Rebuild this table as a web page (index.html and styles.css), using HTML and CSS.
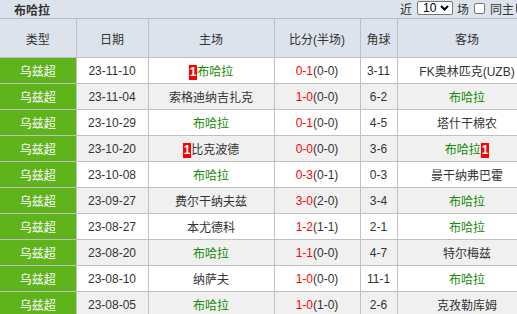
FILE: index.html
```html
<!DOCTYPE html>
<html lang="zh">
<head>
<meta charset="utf-8">
<link rel="stylesheet" href="styles.css">
</head>
<body>
<div class="viewport">
  <div class="panel">
    <div class="titlebar">
      <span class="title">布哈拉</span>
      <div class="controls">
        <span>近</span>
        <span class="select"><span class="sel-val">10</span><svg class="chev" width="9" height="6" viewBox="0 0 9 6"><path d="M1 1 L4.5 4.5 L8 1" fill="none" stroke="#000" stroke-width="2"/></svg></span>
        <span>场</span>
        <span class="check"></span>
        <span class="tail">同主</span>
        <span class="more"></span>
      </div>
    </div>
    <table class="matches">
      <colgroup>
        <col class="c1"><col class="c2"><col class="c3"><col class="c4"><col class="c5"><col class="c6">
      </colgroup>
      <thead>
        <tr><th>类型</th><th>日期</th><th>主场</th><th>比分(半场)</th><th>角球</th><th>客场</th></tr>
      </thead>
      <tbody>
        <tr><td class="lg">乌兹超</td><td>23-11-10</td><td><span class="card">1</span><span class="hl">布哈拉</span></td><td><span class="red">0-1</span>(0-0)</td><td>3-11</td><td class="team">FK奥林匹克(UZB)</td></tr>
        <tr><td class="lg">乌兹超</td><td>23-11-04</td><td class="team">索格迪纳吉扎克</td><td><span class="red">1-0</span>(0-0)</td><td>6-2</td><td><span class="hl">布哈拉</span></td></tr>
        <tr><td class="lg">乌兹超</td><td>23-10-29</td><td><span class="hl">布哈拉</span></td><td><span class="red">0-1</span>(0-0)</td><td>4-5</td><td class="team">塔什干棉农</td></tr>
        <tr><td class="lg">乌兹超</td><td>23-10-20</td><td class="team"><span class="card">1</span>比克波德</td><td><span class="red">0-0</span>(0-0)</td><td>3-6</td><td><span class="hl">布哈拉</span><span class="card">1</span></td></tr>
        <tr><td class="lg">乌兹超</td><td>23-10-08</td><td><span class="hl">布哈拉</span></td><td><span class="red">0-3</span>(0-1)</td><td>0-3</td><td class="team">曼干纳弗巴霍</td></tr>
        <tr><td class="lg">乌兹超</td><td>23-09-27</td><td class="team">费尔干纳夫兹</td><td><span class="red">3-0</span>(2-0)</td><td>3-4</td><td><span class="hl">布哈拉</span></td></tr>
        <tr><td class="lg">乌兹超</td><td>23-08-27</td><td class="team">本尤德科</td><td><span class="red">1-2</span>(1-1)</td><td>2-1</td><td><span class="hl">布哈拉</span></td></tr>
        <tr><td class="lg">乌兹超</td><td>23-08-20</td><td><span class="hl">布哈拉</span></td><td><span class="red">1-1</span>(0-0)</td><td>4-7</td><td class="team">特尔梅兹</td></tr>
        <tr><td class="lg">乌兹超</td><td>23-08-10</td><td class="team">纳萨夫</td><td><span class="red">1-0</span>(0-0)</td><td>11-1</td><td><span class="hl">布哈拉</span></td></tr>
        <tr><td class="lg">乌兹超</td><td>23-08-05</td><td><span class="hl">布哈拉</span></td><td><span class="red">1-0</span>(1-0)</td><td>2-6</td><td class="team">克孜勒库姆</td></tr>
      </tbody>
    </table>
  </div>
</div>
</body>
</html>
```
FILE: styles.css
```css
html, body {
  margin: 0;
  padding: 0;
  overflow: hidden;
  background: #fff;
}
.viewport {
  width: 517px;
  height: 314px;
  overflow: hidden;
}
.panel {
  width: 537px;
  font-family: "Liberation Sans", "Noto Sans CJK SC", sans-serif;
  font-size: 12px;
  color: #333;
}
.titlebar {
  height: 18px;
  background: #dde3ec;
  display: flex;
  align-items: center;
  border-bottom: 1px solid #bbb;
}
.title {
  font-weight: bold;
  padding-left: 14px;
  color: #333;
  font-size: 12px;
}
.controls {
  margin-left: auto;
  display: flex;
  align-items: center;
  gap: 4px;
  font-size: 12px;
  color: #333;
  width: 137px;
  margin-top: -2px;
}
.select {
  display: flex;
  align-items: center;
  justify-content: space-between;
  width: 36px;
  height: 14px;
  border: 1px solid #767676;
  border-radius: 2px;
  background: #fff;
  padding: 0 3px 0 5px;
  box-sizing: border-box;
  margin-left: 1px;
  color: #000;
}
.sel-val {
  font-size: 12px;
  line-height: 13px;
}
.chev {
  display: block;
}
.check {
  width: 11px;
  height: 11px;
  box-sizing: border-box;
  border: 1px solid #767676;
  border-radius: 2px;
  background: #fff;
  margin: 0 1px;
}
.tail {
  white-space: nowrap;
}
.more {
  width: 10px;
  height: 10px;
  background: #555;
  border-radius: 2px;
  margin-left: -2px;
  flex: none;
}
.matches {
  border-collapse: collapse;
  width: 537px;
  table-layout: fixed;
}
.c1 { width: 76px; }
.c2 { width: 72px; }
.c3 { width: 126px; }
.c4 { width: 86px; }
.c5 { width: 37px; }
.c6 { width: 140px; }
.matches th, .matches td {
  text-align: center;
  border: 1px solid #c0c0c0;
  padding: 0;
  white-space: nowrap;
  overflow: hidden;
  font-size: 12px;
}
.matches th:first-child, .matches td:first-child {
  border-left: none;
}
.matches th {
  background: #dde3ec;
  height: 38px;
  font-weight: normal;
  color: #333;
  border-top: none;
}
.matches td {
  height: 25px;
  color: #333;
}
.matches tbody tr:nth-child(even) td {
  background: #f0f0f0;
}
.matches tbody tr td.lg {
  background: #5fb41c;
  color: #fff;
}
.team {
  color: #000;
}
.hl {
  color: #138a00;
}
.red {
  color: #f00;
}
.card {
  display: inline-block;
  background: #f00;
  color: #fff;
  font-weight: bold;
  font-size: 12px;
  line-height: 15px;
  padding: 0 1px;
  vertical-align: 0;
}
```
